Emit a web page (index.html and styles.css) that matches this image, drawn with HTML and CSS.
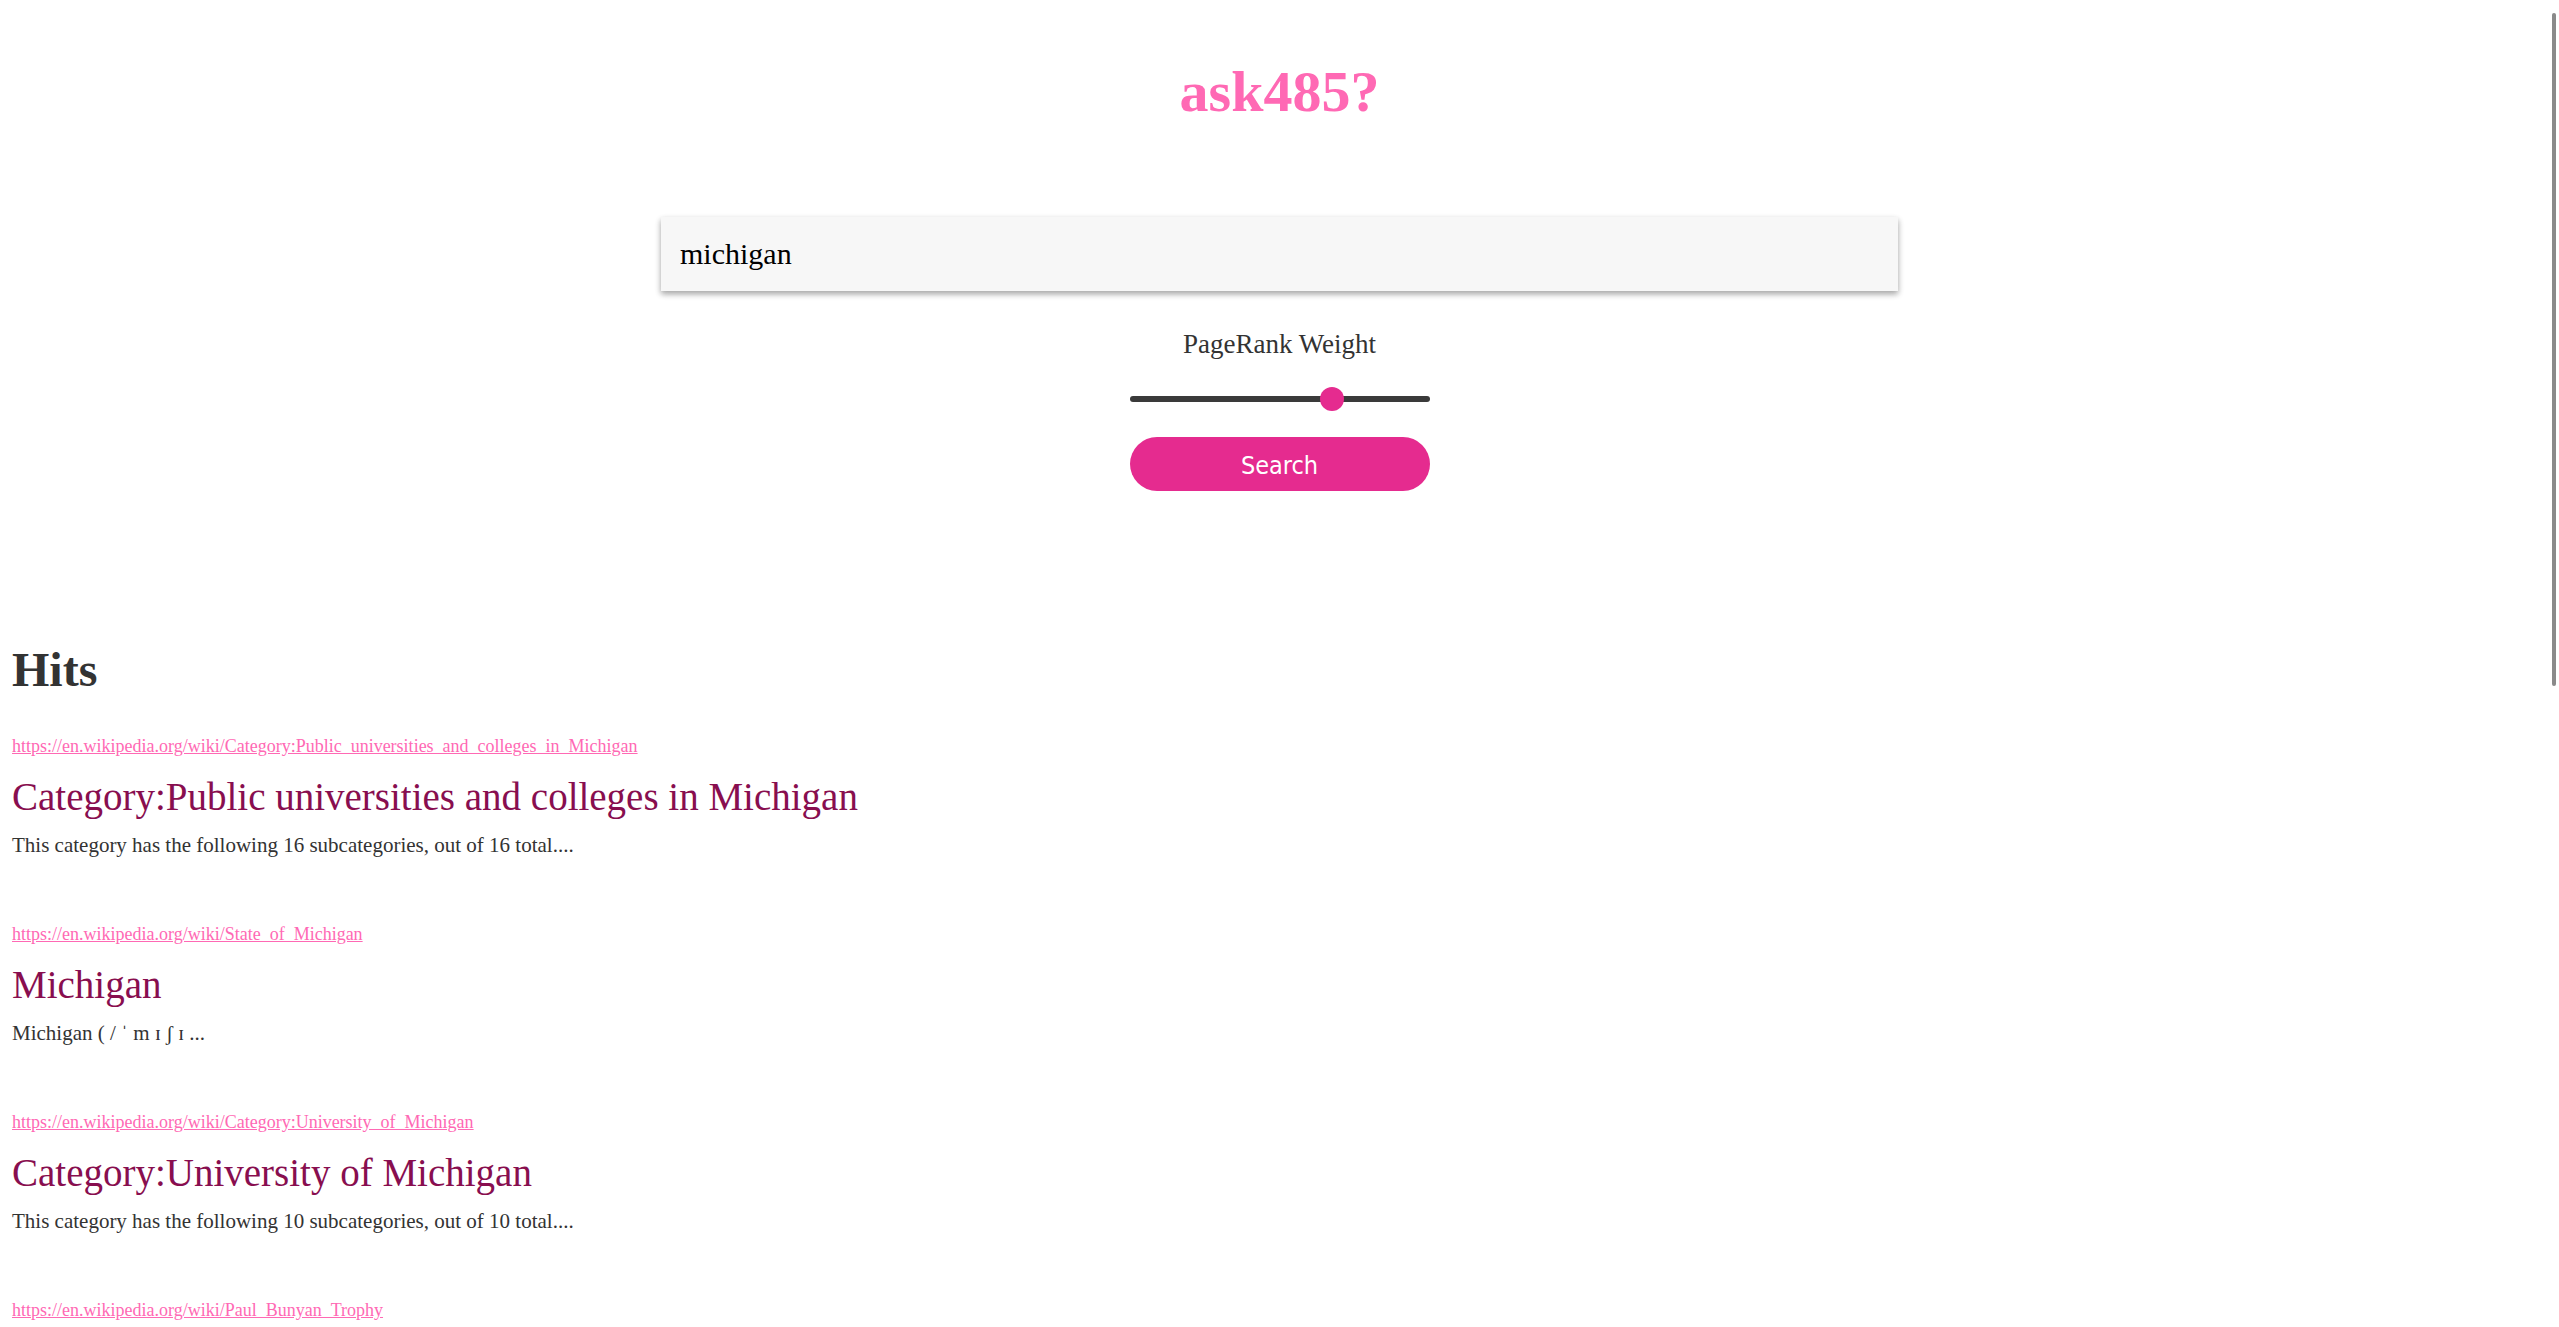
FILE: index.html
```html
<!DOCTYPE html>
<html lang="en">
<head>
<meta charset="utf-8">
<title>ask485?</title>
<link rel="stylesheet" href="styles.css">
</head>
<body>
<div class="scrollbar"></div>
<header class="search">
  <h1 class="logo">ask485?</h1>
  <input class="query" type="text" value="michigan">
  <label class="weight-label">PageRank Weight</label>
  <input class="weight" type="range" min="0" max="100" value="69">
  <button class="go">Search</button>
</header>
<main class="results">
  <h2 class="hits">Hits</h2>
  <div class="hit">
    <a class="url" href="#">https://en.wikipedia.org/wiki/Category:Public_universities_and_colleges_in_Michigan</a>
    <div class="title">Category:Public universities and colleges in Michigan</div>
    <p class="snippet">This category has the following 16 subcategories, out of 16 total....</p>
  </div>
  <div class="hit">
    <a class="url" href="#">https://en.wikipedia.org/wiki/State_of_Michigan</a>
    <div class="title">Michigan</div>
    <p class="snippet">Michigan ( / ˈ m ɪ ʃ ɪ ...</p>
  </div>
  <div class="hit">
    <a class="url" href="#">https://en.wikipedia.org/wiki/Category:University_of_Michigan</a>
    <div class="title">Category:University of Michigan</div>
    <p class="snippet">This category has the following 10 subcategories, out of 10 total....</p>
  </div>
  <div class="hit">
    <a class="url" href="#">https://en.wikipedia.org/wiki/Paul_Bunyan_Trophy</a>
  </div>
</main>
</body>
</html>
```

FILE: styles.css
```css
html {
  scrollbar-width: none;
}
html::-webkit-scrollbar {
  display: none;
}
body {
  margin: 0;
  background: #fff;
  font-family: "Liberation Serif", "Times New Roman", serif;
  color: #333;
}
.scrollbar {
  position: fixed;
  top: 13px;
  right: 3px;
  width: 4px;
  height: 673px;
  background: #8a8a8a;
  border-radius: 2px;
}
.search {
  display: flex;
  flex-direction: column;
  align-items: center;
  padding-top: 58px;
}
.logo {
  margin: 0;
  font-size: 58px;
  line-height: 67px;
  font-weight: bold;
  color: #ff69b4;
}
.query {
  box-sizing: border-box;
  margin-top: 92px;
  width: 1237px;
  height: 74px;
  padding: 0 19px;
  border: none;
  outline: none;
  background: #f7f7f7;
  font-family: "Liberation Serif", "Times New Roman", serif;
  font-size: 30px;
  color: #000;
  box-shadow: 0 3px 6px rgba(0, 0, 0, 0.16), 0 3px 6px rgba(0, 0, 0, 0.23);
}
.weight-label {
  margin-top: 38px;
  font-size: 27px;
  line-height: 31px;
  color: #333;
}
.weight {
  -webkit-appearance: none;
  appearance: none;
  margin: 27px 0 0;
  width: 300px;
  height: 24px;
  background: transparent;
}
.weight::-webkit-slider-runnable-track {
  height: 6px;
  border-radius: 3px;
  background: #3a3a3a;
}
.weight::-webkit-slider-thumb {
  -webkit-appearance: none;
  width: 24px;
  height: 24px;
  margin-top: -9px;
  border-radius: 50%;
  background: #e52b8f;
  border: none;
}
.go {
  margin-top: 26px;
  width: 300px;
  height: 54px;
  border: none;
  border-radius: 27px;
  background: #e52b8f;
  color: #fff;
  font-family: "DejaVu Sans Condensed", "DejaVu Sans", sans-serif;
  font-stretch: condensed;
  font-size: 25px;
  padding: 2px 0 0;
}
.results {
  padding: 0 12px;
  margin-top: 151px;
}
.hits {
  margin: 0 0 39px;
  font-size: 48px;
  line-height: 55px;
  font-weight: bold;
  color: #333;
}
.hit {
  margin-bottom: 67px;
}
.url {
  display: block;
  font-size: 18px;
  line-height: 21px;
  color: #ff69b4;
  text-decoration: underline;
}
.title {
  margin-top: 17px;
  font-size: 39px;
  line-height: 45px;
  color: #880e4f;
}
.snippet {
  margin: 14px 0 0;
  font-size: 21px;
  line-height: 24px;
  color: #333;
}
```
